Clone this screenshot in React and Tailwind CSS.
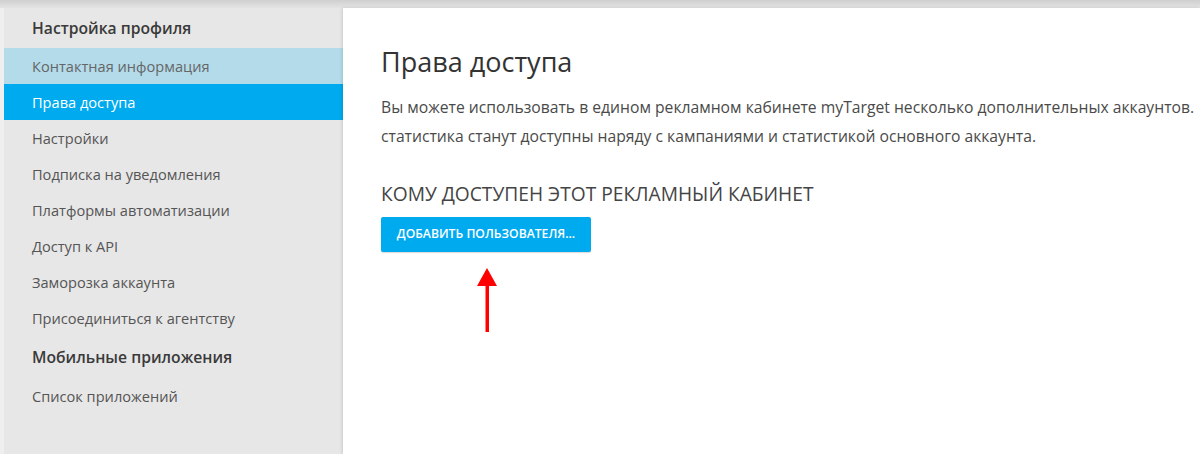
import React from "react";

const menu = [
    { type: "head", label: "Настройка профиля", h: "h-[40px]" },
    { label: "Контактная информация", state: "hover" },
    { label: "Права доступа", state: "active" },
    { label: "Настройки" },
    { label: "Подписка на уведомления" },
    { label: "Платформы автоматизации" },
    { label: "Доступ к API" },
    { label: "Заморозка аккаунта" },
    { label: "Присоединиться к агентству" },
    { type: "head", label: "Мобильные приложения", h: "h-[42px]" },
    { label: "Список приложений" },
];

const Sidebar = () => (
    <aside className="w-[339px] shrink-0 bg-[#e7e7e7]">
        {menu.map((item) => {
            if (item.type === "head") {
                return (
                    <div key={item.label} className={item.h + " flex items-center pl-[28px] pt-[2px] text-[15.7px] font-semibold text-[#3a3a3a]"}>
                        {item.label}
                    </div>
                );
            }
            let cls = "text-[#555]";
            if (item.state === "hover") cls = "bg-[#b3dbea] text-[#666]";
            if (item.state === "active") cls = "bg-[#00aaef] text-white";
            return (
                <div key={item.label} className={"h-[36px] flex items-center pl-[28px] pt-[2px] text-[14.6px] " + cls}>
                    {item.label}
                </div>
            );
        })}
    </aside>
);

const App = () => {
    return (
        <div
            className="w-[1200px] h-[454px] overflow-hidden bg-[#e7e7e7] flex flex-col"
            style={{ fontFamily: '"Open Sans", "Noto Sans", sans-serif' }}
        >
            {/* top shadow strip */}
            <div className="h-[8px] shrink-0 bg-gradient-to-b from-[#cfcfcf] to-[#e4e4e4]" />

            <div className="flex flex-1 min-h-0">
                <div className="w-[4px] shrink-0 bg-[#efefef]" />
                <Sidebar />

                <main className="flex-1 min-w-0 bg-white shadow-[-1px_0_3px_rgba(0,0,0,0.12)] pl-[38px] pt-[35px] whitespace-nowrap">
                    <h1 className="text-[27px] leading-[38px] font-normal text-[#333]">Права доступа</h1>
                    <p className="mt-[12px] text-[15.7px] leading-[29px] text-[#4a4a4a]">
                        Вы можете использовать в едином рекламном кабинете myTarget несколько дополнительных аккаунтов.
                        <br />
                        статистика станут доступны наряду с кампаниями и статистикой основного аккаунта.
                    </p>

                    <h2 className="mt-[29px] text-[19.2px] leading-[28px] text-[#444] uppercase">
                        Кому доступен этот рекламный кабинет
                    </h2>
                    <button className="mt-[9px] h-[35px] w-[210px] rounded-[2px] bg-[#00aaef] text-white text-[12.2px] font-semibold uppercase shadow-[0_1px_1px_rgba(0,0,0,0.15)]">
                        Добавить пользователя...
                    </button>

                    {/* red pointer arrow */}
                    <svg width="22" height="64" viewBox="0 0 22 64" className="ml-[95px] mt-[16px] block">
                        <polygon points="11,0 21,18 1,18" fill="#ff0000" />
                        <rect x="9.5" y="16" width="3.5" height="48" fill="#ff0000" />
                    </svg>
                </main>
            </div>
        </div>
    );
};

export default App;
